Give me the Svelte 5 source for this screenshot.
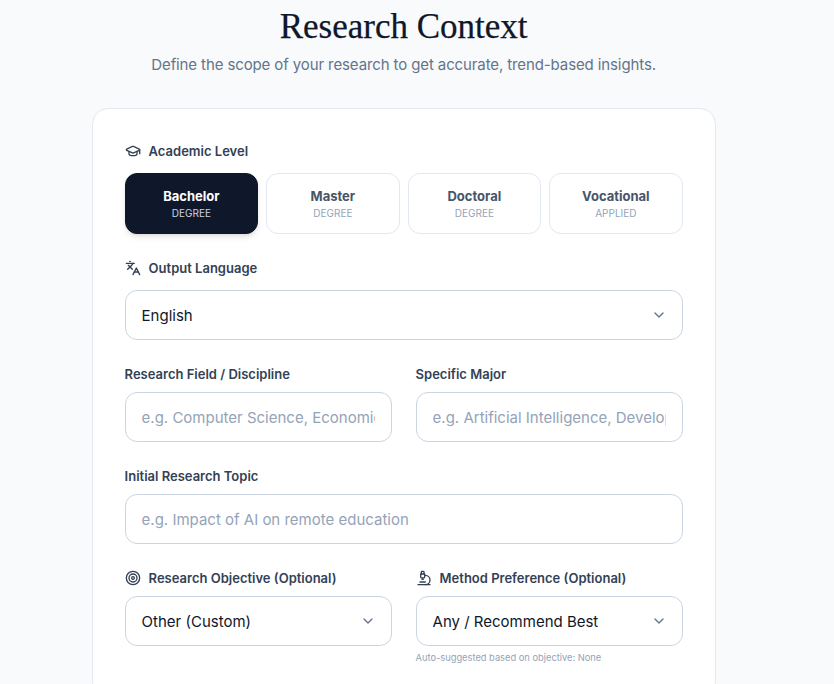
<script>
    const levels = [
        { name: 'Bachelor', sub: 'DEGREE' },
        { name: 'Master', sub: 'DEGREE' },
        { name: 'Doctoral', sub: 'DEGREE' },
        { name: 'Vocational', sub: 'APPLIED' }
    ];
    let active = $state('Bachelor');
</script>

{#snippet chevron()}
    <svg class="chevron" viewBox="0 0 24 24" aria-hidden="true">
        <path d="m6 9 6 6 6-6" />
    </svg>
{/snippet}

<main>
    <header>
        <h1>Research Context</h1>
        <p>Define the scope of your research to get accurate, trend-based insights.</p>
    </header>

    <section class="card">
        <div class="field">
            <div class="label wide">
                <svg class="icon" viewBox="0 0 24 24" aria-hidden="true">
                    <path d="M21.42 10.922a1 1 0 0 0-.019-1.838L12.83 5.18a2 2 0 0 0-1.66 0L2.6 9.08a1 1 0 0 0 0 1.832l8.57 3.908a2 2 0 0 0 1.66 0z" />
                    <path d="M22 10v6" />
                    <path d="M6 12.5V16a6 3 0 0 0 12 0v-3.5" />
                </svg>
                Academic Level
            </div>
            <div class="levels">
                {#each levels as level}
                    <button
                        type="button"
                        class="level"
                        class:active={active === level.name}
                        onclick={() => (active = level.name)}
                    >
                        <span class="name">{level.name}</span>
                        <span class="sub">{level.sub}</span>
                    </button>
                {/each}
            </div>
        </div>

        <div class="field">
            <label class="label wide" for="language">
                <svg class="icon" viewBox="0 0 24 24" aria-hidden="true">
                    <path d="m5 8 6 6" />
                    <path d="m4 14 6-6 2-3" />
                    <path d="M2 5h12" />
                    <path d="M7 2h1" />
                    <path d="m22 22-5-10-5 10" />
                    <path d="M14 18h6" />
                </svg>
                Output Language
            </label>
            <div class="select">
                <select id="language">
                    <option>English</option>
                    <option>Indonesian</option>
                </select>
                {@render chevron()}
            </div>
        </div>

        <div class="columns">
            <div class="field">
                <label class="label" for="discipline">Research Field / Discipline</label>
                <input id="discipline" type="text" placeholder="e.g. Computer Science, Economics" />
            </div>
            <div class="field">
                <label class="label" for="major">Specific Major</label>
                <input id="major" type="text" placeholder="e.g. Artificial Intelligence, Development" />
            </div>
        </div>

        <div class="field">
            <label class="label" for="topic">Initial Research Topic</label>
            <input id="topic" type="text" placeholder="e.g. Impact of AI on remote education" />
        </div>

        <div class="columns">
            <div class="field">
                <label class="label" for="objective">
                    <svg class="icon" viewBox="0 0 24 24" aria-hidden="true">
                        <circle cx="12" cy="12" r="10" />
                        <circle cx="12" cy="12" r="6" />
                        <circle cx="12" cy="12" r="2" />
                    </svg>
                    Research Objective (Optional)
                </label>
                <div class="select">
                    <select id="objective">
                        <option>Other (Custom)</option>
                    </select>
                    {@render chevron()}
                </div>
            </div>
            <div class="field">
                <label class="label" for="method">
                    <svg class="icon" viewBox="0 0 24 24" aria-hidden="true">
                        <path d="M6 18h8" />
                        <path d="M3 22h18" />
                        <path d="M14 22a7 7 0 1 0 0-14h-1" />
                        <path d="M9 14h2" />
                        <path d="M9 12a2 2 0 0 1-2-2V6h6v4a2 2 0 0 1-2 2Z" />
                        <path d="M12 6V3a1 1 0 0 0-1-1H9a1 1 0 0 0-1 1v3" />
                    </svg>
                    Method Preference (Optional)
                </label>
                <div class="select">
                    <select id="method">
                        <option>Any / Recommend Best</option>
                    </select>
                    {@render chevron()}
                </div>
                <p class="hint">Auto-suggested based on objective: None</p>
            </div>
        </div>
    </section>
</main>

<style>
    :global(body) {
        background: #f8fafc;
        overflow: hidden;
    }

    main {
        width: 624px;
        height: 684px;
        margin-left: 91.6px;
        font-family: Inter, 'Noto Sans', sans-serif;
    }

    header {
        text-align: center;
        padding-top: 9px;
        margin-bottom: 31px;
    }

    h1 {
        margin: 0 0 8px;
        font-family: 'Liberation Serif', serif;
        font-size: 35px;
        line-height: 36px;
        font-weight: 400;
        -webkit-text-stroke: 0.25px #0f172a;
        color: #0f172a;
    }

    header p {
        margin: 0;
        font-size: 15px;
        line-height: 24px;
        letter-spacing: -0.11px;
        color: #64748b;
    }

    .card {
        display: flex;
        flex-direction: column;
        gap: 24px;
        padding: 32px;
        background: #fff;
        border: 1px solid #e2e8f0;
        border-radius: 16px;
    }

    .field {
        display: flex;
        flex-direction: column;
        min-width: 0;
    }

    .label {
        display: flex;
        align-items: center;
        gap: 8px;
        margin-bottom: 8px;
        font-size: 13px;
        line-height: 20px;
        font-weight: 600;
        color: #334155;
    }

    .label.wide {
        margin-bottom: 12px;
    }

    .icon {
        width: 16px;
        height: 16px;
        flex: none;
        fill: none;
        stroke: currentColor;
        stroke-width: 2;
        stroke-linecap: round;
        stroke-linejoin: round;
    }

    .levels {
        display: grid;
        grid-template-columns: repeat(4, 1fr);
        gap: 8px;
    }

    .level {
        display: flex;
        flex-direction: column;
        align-items: center;
        justify-content: center;
        height: 61px;
        padding: 0;
        background: #fff;
        border: 1px solid #e2e8f0;
        border-radius: 12px;
        font-family: inherit;
        cursor: pointer;
    }

    .level.active {
        background: #0f172a;
        border-color: #0f172a;
        box-shadow: 0 4px 6px -1px rgba(0, 0, 0, 0.1), 0 2px 4px -2px rgba(0, 0, 0, 0.1);
    }

    .name {
        font-size: 13px;
        line-height: 20px;
        font-weight: 700;
        color: #475569;
    }

    .sub {
        font-size: 10px;
        line-height: 15px;
        color: #94a3b8;
    }

    .active .name {
        color: #fff;
    }

    .active .sub {
        color: #cbd5e1;
    }

    .columns {
        display: grid;
        grid-template-columns: 1fr 1fr;
        gap: 24px;
    }

    input,
    select {
        box-sizing: border-box;
        width: 100%;
        height: 50px;
        padding: 0 16px;
        background: #fff;
        border: 1px solid #cbd5e1;
        border-radius: 12px;
        font-family: inherit;
        font-size: 15px;
        color: #0f172a;
        outline: none;
    }

    select {
        appearance: none;
        padding-right: 40px;
    }

    input::placeholder {
        color: #94a3b8;
    }

    .select {
        position: relative;
    }

    .chevron {
        position: absolute;
        top: 17px;
        right: 16px;
        width: 16px;
        height: 16px;
        fill: none;
        stroke: #64748b;
        stroke-width: 2;
        stroke-linecap: round;
        stroke-linejoin: round;
        pointer-events: none;
    }

    .hint {
        margin: 4px 0 0;
        font-size: 9.3px;
        line-height: 15px;
        color: #94a3b8;
    }
</style>
